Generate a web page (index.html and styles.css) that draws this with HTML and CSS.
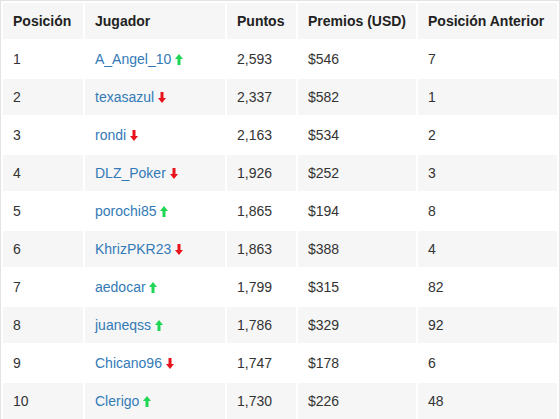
FILE: index.html
```html
<!DOCTYPE html>
<html lang="es">
<head>
<meta charset="utf-8">
<link rel="stylesheet" href="styles.css">
</head>
<body>
<div class="wrap">
<table class="rank">
<colgroup><col class="c1"><col class="c2"><col class="c3"><col class="c4"><col class="c5"></colgroup>
<thead>
<tr><th>Posición</th><th>Jugador</th><th>Puntos</th><th>Premios (USD)</th><th>Posición Anterior</th></tr>
</thead>
<tbody>
<tr><td>1</td><td><a class="player">A_Angel_10</a> <svg class="arr up" viewBox="0 0 8 11"><path d="M4 0L8 5H5.5V11H2.5V5H0Z"/></svg></td><td>2,593</td><td>$546</td><td>7</td></tr>
<tr><td>2</td><td><a class="player">texasazul</a> <svg class="arr down" viewBox="0 0 8 11"><path d="M4 11L8 6H5.5V0H2.5V6H0Z"/></svg></td><td>2,337</td><td>$582</td><td>1</td></tr>
<tr><td>3</td><td><a class="player">rondi</a> <svg class="arr down" viewBox="0 0 8 11"><path d="M4 11L8 6H5.5V0H2.5V6H0Z"/></svg></td><td>2,163</td><td>$534</td><td>2</td></tr>
<tr><td>4</td><td><a class="player">DLZ_Poker</a> <svg class="arr down" viewBox="0 0 8 11"><path d="M4 11L8 6H5.5V0H2.5V6H0Z"/></svg></td><td>1,926</td><td>$252</td><td>3</td></tr>
<tr><td>5</td><td><a class="player">porochi85</a> <svg class="arr up" viewBox="0 0 8 11"><path d="M4 0L8 5H5.5V11H2.5V5H0Z"/></svg></td><td>1,865</td><td>$194</td><td>8</td></tr>
<tr><td>6</td><td><a class="player">KhrizPKR23</a> <svg class="arr down" viewBox="0 0 8 11"><path d="M4 11L8 6H5.5V0H2.5V6H0Z"/></svg></td><td>1,863</td><td>$388</td><td>4</td></tr>
<tr><td>7</td><td><a class="player">aedocar</a> <svg class="arr up" viewBox="0 0 8 11"><path d="M4 0L8 5H5.5V11H2.5V5H0Z"/></svg></td><td>1,799</td><td>$315</td><td>82</td></tr>
<tr><td>8</td><td><a class="player">juaneqss</a> <svg class="arr up" viewBox="0 0 8 11"><path d="M4 0L8 5H5.5V11H2.5V5H0Z"/></svg></td><td>1,786</td><td>$329</td><td>92</td></tr>
<tr><td>9</td><td><a class="player">Chicano96</a> <svg class="arr down" viewBox="0 0 8 11"><path d="M4 11L8 6H5.5V0H2.5V6H0Z"/></svg></td><td>1,747</td><td>$178</td><td>6</td></tr>
<tr><td>10</td><td><a class="player">Clerigo</a> <svg class="arr up" viewBox="0 0 8 11"><path d="M4 0L8 5H5.5V11H2.5V5H0Z"/></svg></td><td>1,730</td><td>$226</td><td>48</td></tr>
</tbody>
</table>
</div>
</body>
</html>
```
FILE: styles.css
```css
html, body {
  margin: 0;
  padding: 0;
  background: #fff;
}
body {
  font-family: "Liberation Sans", Arial, sans-serif;
  font-size: 14px;
  color: #333;
}
.wrap {
  width: 560px;
  box-sizing: border-box;
  border: 1px solid #e3e3e3;
  border-bottom: none;
}
.rank {
  width: 100%;
  table-layout: fixed;
  border-collapse: separate;
  border-spacing: 2px;
}
.c1 { width: 80px; }
.c2 { width: 140px; }
.c3 { width: 69px; }
.c4 { width: 118px; }
.c5 { width: 139px; }
.rank th, .rank td {
  height: 36px;
  padding: 0 10px;
  text-align: left;
  vertical-align: middle;
  white-space: nowrap;
  box-sizing: border-box;
}
.rank th {
  font-weight: bold;
  background: #f6f6f6;
  color: #222;
}
.rank tbody tr:nth-child(even) td {
  background: #f6f6f6;
}
.player {
  color: #337ab7;
  text-decoration: none;
}
.arr {
  width: 8px;
  height: 11px;
  vertical-align: -1px;
}
.arr.up { fill: #1fd655; }
.arr.down { fill: #e8141b; }
```
